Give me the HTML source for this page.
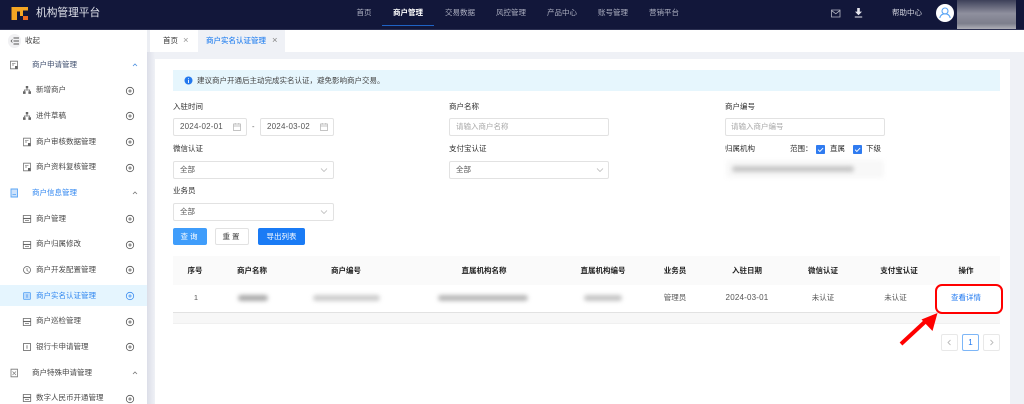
<!DOCTYPE html>
<html lang="zh">
<head>
<meta charset="utf-8">
<style>
html{margin:0;padding:0;width:1024px;height:404px;overflow:hidden;background:#eff1f6}
body{margin:0;padding:0;width:1024px;height:404px;position:relative;overflow:hidden;font-family:"Liberation Sans","Noto Sans CJK SC",sans-serif;font-size:7.5px;color:#4a4a4a}
#w{position:absolute;left:0;top:0;width:1024px;height:404px;overflow:hidden;filter:blur(.35px)}
.b,.t,svg.i{position:absolute}
.t{white-space:nowrap;line-height:10px;height:10px}
.c{transform:translateX(-50%)}
.nav{color:#aeb1c2;top:8px}
.s{color:#484848}
.g{color:#3c4c6c}
.lab{color:#2e2e2e}
.box{position:absolute;box-sizing:border-box;border:1px solid #e2e2e2;border-radius:2px;background:#fff}
.blur{position:absolute;background:#b4b4b4;filter:blur(2.2px);border-radius:3px}
.th{top:266px;color:#222;font-weight:600}
.td{top:293px;color:#555}
svg{overflow:visible}
</style>
</head>
<body>
<div id="w">
<svg width="0" height="0" style="position:absolute">
<symbol id="plus" viewBox="0 0 10 10"><circle cx="5" cy="5" r="3.7" fill="none" stroke="#555" stroke-width=".8"/><path d="M5 3.2v3.6M3.2 5h3.6" stroke="#555" stroke-width=".8"/></symbol>
<symbol id="plusb" viewBox="0 0 10 10"><circle cx="5" cy="5" r="3.7" fill="none" stroke="#3c8df0" stroke-width=".8"/><path d="M5 3.2v3.6M3.2 5h3.6" stroke="#3c8df0" stroke-width=".8"/></symbol>
<symbol id="tree" viewBox="0 0 10 10"><path d="M3.8 1h2.4v2.4H3.8zM1 6.3h2.6v2.6H1zM6.4 6.3H9v2.6H6.4z" fill="#666"/><path d="M5 3.4v1.5M2.3 6.3V5h5.4v1.3" stroke="#666" stroke-width=".7" fill="none"/></symbol>
<symbol id="doc" viewBox="0 0 10 10"><path d="M1.5 1.2h7v7.6h-7z" fill="none" stroke="#777" stroke-width=".8"/><path d="M3 3.3h3.5M3 5h2" stroke="#777" stroke-width=".7"/><path d="M6 6h2.6v2.8H6z" fill="#666"/></symbol>
<symbol id="shop" viewBox="0 0 10 10"><path d="M1.3 1.5h7.4v7H1.3z" fill="none" stroke="#666" stroke-width=".8"/><path d="M1.3 4.5h7.4" stroke="#666" stroke-width="1.1"/><path d="M3 6.5h4" stroke="#666" stroke-width=".7"/></symbol>
<symbol id="cal" viewBox="0 0 10 10"><path d="M1.5 2h7v6.5h-7zM1.5 4h7M3.2 1v1.6M6.8 1v1.6" fill="none" stroke="#b0b0b0" stroke-width=".7"/></symbol>
<symbol id="down" viewBox="0 0 10 10"><path d="M2 3.5L5 6.5 8 3.5" fill="none" stroke="#b0b0b0" stroke-width=".7"/></symbol>
<symbol id="chk" viewBox="0 0 10 10"><rect x="0" y="0" width="10" height="10" rx="1" fill="#2f7bf0"/><path d="M2.3 5.2l2 2 3.6-3.8" fill="none" stroke="#fff" stroke-width="1"/></symbol>
</svg>

<!-- header -->
<div class="b" style="left:0;top:0;width:1024px;height:30px;background:#12173a"></div>
<svg class="i" style="left:11px;top:6px" width="18" height="15" viewBox="0 0 18 15">
<path d="M.5 1H17V4.500H12V10H9V5.500H6V14H.5z" fill="#f5a623"/>
<rect x="12" y="10" width="5" height="4" fill="#ee6a1f"/>
</svg>
<div class="t" style="left:36px;top:8px;font-size:10.7px;line-height:11px;height:11px;color:#e2e4ec">机构管理平台</div>
<div class="t nav c" style="left:364px">首页</div>
<div class="t nav c" style="left:408px;color:#fff;font-weight:600">商户管理</div>
<div class="t nav c" style="left:460px">交易数据</div>
<div class="t nav c" style="left:511px">风控管理</div>
<div class="t nav c" style="left:562px">产品中心</div>
<div class="t nav c" style="left:613px">账号管理</div>
<div class="t nav c" style="left:664px">营销平台</div>
<div class="b" style="left:382px;top:25px;width:52px;height:1px;background:#1f63c4"></div>
<svg class="i" style="left:831px;top:9px" width="10" height="9" viewBox="0 0 10 9"><path d="M.5 1h8.500v7H.5z" fill="none" stroke="#b5b7c4" stroke-width=".8"/><path d="M.5 1.500L4.800 4.800 9 1.500" fill="none" stroke="#b5b7c4" stroke-width=".8"/></svg>
<svg class="i" style="left:854px;top:8px" width="9" height="10" viewBox="0 0 9 10"><path d="M3.200 0h2.600v3.600H8L4.500 7.200 1 3.600h2.200z" fill="#e6e7ee"/><path d="M.8 9h7.400" stroke="#e6e7ee" stroke-width="1"/></svg>
<div class="t" style="left:892px;top:8px;color:#d4d6e0">帮助中心</div>
<svg class="i" style="left:936px;top:4px" width="18" height="18" viewBox="0 0 18 18"><circle cx="9" cy="9" r="9" fill="#fff"/><circle cx="9" cy="7" r="3" fill="none" stroke="#5aa5f5" stroke-width="1.100"/><path d="M3.800 14c.6-3 2.600-4.200 5.200-4.200s4.600 1.200 5.200 4.200" fill="none" stroke="#5aa5f5" stroke-width="1.100"/></svg>
<div class="b" style="left:957px;top:0;width:59px;height:30px;background:linear-gradient(180deg,#3d4059 0%,#8f909e 45%,#7c7e8c 78%,#b9b9c0 100%)"></div>
<div class="b" style="left:0;top:29px;width:1024px;height:1px;background:#2c3152"></div>

<!-- sidebar -->
<div class="b" style="left:0;top:30px;width:147px;height:374px;background:#fff"></div>
<div class="b" style="left:147px;top:30px;width:8px;height:374px;background:linear-gradient(90deg,#dcdee8,#eff1f6)"></div>
<div class="b" style="left:8px;top:34px;width:13px;height:14px;border-radius:7px;background:#f1f1f3"></div>
<svg class="i" style="left:10px;top:36px" width="10" height="10" viewBox="0 0 10 10"><path d="M3.500 2H9M3.500 5H9M3.500 8H9" stroke="#555" stroke-width=".9"/><path d="M2.400 3.500L1 5l1.400 1.500" fill="none" stroke="#555" stroke-width=".7"/></svg>
<div class="t" style="left:25px;top:36px;color:#444">收起</div>

<svg class="i" style="left:9px;top:60px" width="10" height="10"><use href="#doc"/></svg>
<div class="t g" style="left:32px;top:60px">商户申请管理</div>
<svg class="i" style="left:130px;top:60px" width="10" height="10" viewBox="0 0 10 10"><path d="M3 6l2-2 2 2" fill="none" stroke="#4a8fe0" stroke-width=".8"/></svg>

<svg class="i" style="left:22px;top:85px" width="10" height="10"><use href="#tree"/></svg>
<div class="t s" style="left:36px;top:85px">新增商户</div>
<svg class="i" style="left:124.500px;top:85.500px" width="10" height="10"><use href="#plus"/></svg>

<svg class="i" style="left:22px;top:111px" width="10" height="10"><use href="#tree"/></svg>
<div class="t s" style="left:36px;top:111px">进件草稿</div>
<svg class="i" style="left:124.500px;top:111px" width="10" height="10"><use href="#plus"/></svg>

<svg class="i" style="left:22px;top:137px" width="10" height="10"><use href="#doc"/></svg>
<div class="t s" style="left:36px;top:136.500px">商户审核数据管理</div>
<svg class="i" style="left:124.500px;top:137px" width="10" height="10"><use href="#plus"/></svg>

<svg class="i" style="left:22px;top:162px" width="10" height="10"><use href="#doc"/></svg>
<div class="t s" style="left:36px;top:162px">商户资料复核管理</div>
<svg class="i" style="left:124.500px;top:162.500px" width="10" height="10"><use href="#plus"/></svg>

<svg class="i" style="left:9px;top:188px" width="10" height="10" viewBox="0 0 10 10"><path d="M2 1h6.500v8H2z" fill="#cfe3fb" stroke="#5aa5f5" stroke-width=".9"/><path d="M3.500 6.500h3.500" stroke="#5aa5f5" stroke-width=".8"/></svg>
<div class="t" style="left:32px;top:188px;color:#2f86f0">商户信息管理</div>
<svg class="i" style="left:130px;top:188px" width="10" height="10" viewBox="0 0 10 10"><path d="M3 6l2-2 2 2" fill="none" stroke="#777" stroke-width=".8"/></svg>

<svg class="i" style="left:22px;top:214px" width="10" height="10"><use href="#shop"/></svg>
<div class="t s" style="left:36px;top:213.500px">商户管理</div>
<svg class="i" style="left:124.500px;top:214px" width="10" height="10"><use href="#plus"/></svg>

<svg class="i" style="left:22px;top:239.500px" width="10" height="10"><use href="#shop"/></svg>
<div class="t s" style="left:36px;top:239px">商户归属修改</div>
<svg class="i" style="left:124.500px;top:239.500px" width="10" height="10"><use href="#plus"/></svg>

<svg class="i" style="left:22px;top:265px" width="10" height="10" viewBox="0 0 10 10"><circle cx="5" cy="5" r="3.500" fill="none" stroke="#666" stroke-width=".8"/><path d="M5 3v2.500l1.500 1" fill="none" stroke="#666" stroke-width=".7"/></svg>
<div class="t s" style="left:36px;top:265px">商户开发配置管理</div>
<svg class="i" style="left:124.500px;top:265px" width="10" height="10"><use href="#plus"/></svg>

<div class="b" style="left:0;top:285px;width:147px;height:21px;background:#e5f5fe"></div>
<svg class="i" style="left:22px;top:291px" width="10" height="10" viewBox="0 0 10 10"><rect x="1.500" y="1.500" width="7" height="7" rx="1" fill="#bcdcfb" stroke="#5aa5f5" stroke-width=".8"/><path d="M5 3.200v3.600" stroke="#3c8df0" stroke-width=".8"/></svg>
<div class="t" style="left:36px;top:290.500px;color:#2f86f0">商户实名认证管理</div>
<svg class="i" style="left:124.500px;top:291px" width="10" height="10"><use href="#plusb"/></svg>

<svg class="i" style="left:22px;top:316.500px" width="10" height="10"><use href="#shop"/></svg>
<div class="t s" style="left:36px;top:316px">商户巡检管理</div>
<svg class="i" style="left:124.500px;top:316.500px" width="10" height="10"><use href="#plus"/></svg>

<svg class="i" style="left:22px;top:342px" width="10" height="10" viewBox="0 0 10 10"><rect x="1.500" y="1.500" width="7" height="7" fill="none" stroke="#666" stroke-width=".8"/><path d="M5 3.200v3.600" stroke="#666" stroke-width=".8"/></svg>
<div class="t s" style="left:36px;top:341.500px">银行卡申请管理</div>
<svg class="i" style="left:124.500px;top:342px" width="10" height="10"><use href="#plus"/></svg>

<svg class="i" style="left:9px;top:368px" width="10" height="10" viewBox="0 0 10 10"><path d="M2 1.200h6.500v7.600H2z" fill="none" stroke="#777" stroke-width=".8"/><path d="M3.500 3.500l3.500 3.500M7 3.500L3.500 7" stroke="#777" stroke-width=".6"/></svg>
<div class="t g" style="left:32px;top:367.500px;color:#444">商户特殊申请管理</div>
<svg class="i" style="left:130px;top:368px" width="10" height="10" viewBox="0 0 10 10"><path d="M3 6l2-2 2 2" fill="none" stroke="#777" stroke-width=".8"/></svg>

<svg class="i" style="left:22px;top:393px" width="10" height="10"><use href="#shop"/></svg>
<div class="t s" style="left:36px;top:393px;height:10px">数字人民币开通管理</div>
<svg class="i" style="left:124.500px;top:393.500px" width="10" height="10"><use href="#plus"/></svg>

<!-- tabs -->
<div class="b" style="left:147px;top:30px;width:877px;height:22px;background:#fff"></div>
<div class="b" style="left:147px;top:30px;width:3px;height:22px;background:#eceef3"></div>
<div class="t" style="left:163px;top:35.500px;color:#333">首页</div>
<div class="t" style="left:183px;top:35.500px;color:#999;font-size:9.500px">×</div>
<div class="b" style="left:198px;top:30px;width:87px;height:22px;background:#eff1f6"></div>
<div class="t" style="left:206px;top:36px;color:#2f86f0;font-weight:500">商户实名认证管理</div>
<div class="t" style="left:272px;top:36px;color:#888;font-size:9.500px">×</div>

<!-- card -->
<div class="b" style="left:155px;top:59px;width:855px;height:345px;background:#fff"></div>

<!-- alert -->
<div class="b" style="left:173px;top:70px;width:827px;height:21px;background:#e6f6fd"></div>
<svg class="i" style="left:184px;top:76px" width="9" height="9" viewBox="0 0 9 9"><circle cx="4.500" cy="4.500" r="4" fill="#2378ee"/><path d="M4.500 2v.8M4.500 3.700V7" stroke="#fff" stroke-width=".9"/></svg>
<div class="t" style="left:197px;top:75.500px;color:#444">建议商户开通后主动完成实名认证，避免影响商户交易。</div>

<!-- form -->
<div class="t lab" style="left:173px;top:102px">入驻时间</div>
<div class="box" style="left:173px;top:118px;width:74px;height:18px"></div>
<div class="t" style="left:180px;top:122px;color:#555;font-size:8px;letter-spacing:.2px">2024-02-01</div>
<svg class="i" style="left:232px;top:122px" width="10" height="10"><use href="#cal"/></svg>
<div class="t" style="left:252px;top:122px;color:#555">-</div>
<div class="box" style="left:260px;top:118px;width:74px;height:18px"></div>
<div class="t" style="left:267px;top:122px;color:#555;font-size:8px;letter-spacing:.2px">2024-03-02</div>
<svg class="i" style="left:319px;top:122px" width="10" height="10"><use href="#cal"/></svg>

<div class="t lab" style="left:173px;top:144px">微信认证</div>
<div class="box" style="left:173px;top:161px;width:161px;height:17.500px"></div>
<div class="t" style="left:180px;top:165px;color:#555">全部</div>
<svg class="i" style="left:319px;top:164.500px" width="10" height="10"><use href="#down"/></svg>

<div class="t lab" style="left:173px;top:186px">业务员</div>
<div class="box" style="left:173px;top:203px;width:161px;height:17.500px"></div>
<div class="t" style="left:180px;top:207px;color:#555">全部</div>
<svg class="i" style="left:319px;top:206.500px" width="10" height="10"><use href="#down"/></svg>

<div class="b" style="left:173px;top:228px;width:34px;height:17px;border-radius:2px;background:#3f9dfb"></div>
<div class="t c" style="left:190px;top:231.500px;color:#fff;letter-spacing:2px">查询</div>
<div class="box" style="left:215px;top:228px;width:34px;height:17px"></div>
<div class="t c" style="left:232px;top:231.500px;color:#444;letter-spacing:2px">重置</div>
<div class="b" style="left:258px;top:228px;width:47px;height:17px;border-radius:2px;background:#1a7bf5"></div>
<div class="t c" style="left:281.500px;top:231.500px;color:#fff">导出列表</div>

<div class="t lab" style="left:449px;top:102px">商户名称</div>
<div class="box" style="left:449px;top:118px;width:160px;height:18px"></div>
<div class="t" style="left:456px;top:122px;color:#a8a8a8">请输入商户名称</div>

<div class="t lab" style="left:449px;top:144px">支付宝认证</div>
<div class="box" style="left:449px;top:161px;width:160px;height:17.500px"></div>
<div class="t" style="left:456px;top:165px;color:#555">全部</div>
<svg class="i" style="left:595px;top:164.500px" width="10" height="10"><use href="#down"/></svg>

<div class="t lab" style="left:725px;top:102px">商户编号</div>
<div class="box" style="left:724.500px;top:118px;width:160px;height:18px"></div>
<div class="t" style="left:731px;top:122px;color:#a8a8a8">请输入商户编号</div>

<div class="t lab" style="left:725px;top:144px">归属机构</div>
<div class="t lab" style="left:790px;top:144px">范围：</div>
<svg class="i" style="left:816px;top:144.500px" width="9" height="9"><use href="#chk"/></svg>
<div class="t lab" style="left:830px;top:144px">直属</div>
<svg class="i" style="left:853px;top:144.500px" width="9" height="9"><use href="#chk"/></svg>
<div class="t lab" style="left:866px;top:144px">下级</div>
<div class="blur" style="left:726px;top:160px;width:158px;height:18px;background:#f8f8f8"></div>
<div class="blur" style="left:732px;top:166px;width:122px;height:6px;background:#c6c6c6"></div>

<!-- table -->
<div class="b" style="left:173px;top:256px;width:827px;height:29px;background:#fafafa"></div>
<div class="t th c" style="left:195px">序号</div>
<div class="t th c" style="left:252px">商户名称</div>
<div class="t th c" style="left:346px">商户编号</div>
<div class="t th c" style="left:484px">直属机构名称</div>
<div class="t th c" style="left:603px">直属机构编号</div>
<div class="t th c" style="left:675px">业务员</div>
<div class="t th c" style="left:747px">入驻日期</div>
<div class="t th c" style="left:823px">微信认证</div>
<div class="t th c" style="left:899px">支付宝认证</div>
<div class="t th c" style="left:966px">操作</div>

<div class="t td c" style="left:196px">1</div>
<div class="blur" style="left:238px;top:295px;width:30px;height:6px;background:#aaa"></div>
<div class="blur" style="left:313px;top:295px;width:67px;height:6px;background:#ccc"></div>
<div class="blur" style="left:438px;top:295px;width:90px;height:6px;background:#b8b8b8"></div>
<div class="blur" style="left:584px;top:295px;width:38px;height:6px;background:#c4c4c4"></div>
<div class="t td c" style="left:675px">管理员</div>
<div class="t td c" style="left:747px;font-size:8px;letter-spacing:.2px">2024-03-01</div>
<div class="t td c" style="left:823px">未认证</div>
<div class="t td c" style="left:895.500px">未认证</div>
<div class="t td c" style="left:966px;color:#1f78f0">查看详情</div>

<div class="b" style="left:173px;top:312px;width:827px;height:1px;background:#e2e2e2"></div>
<div class="b" style="left:173px;top:313px;width:827px;height:11px;background:#f7f7f7;border-bottom:1px solid #f0f0f0;box-sizing:border-box"></div>

<!-- red annotation -->
<div class="b" style="left:935px;top:283.500px;width:68px;height:30.500px;box-sizing:border-box;border:2px solid #f00;border-radius:7px"></div>
<svg class="i" style="left:895px;top:305px" width="50" height="48" viewBox="0 0 50 48"><path d="M6 39L33 14" stroke="#f00" stroke-width="4"/><path d="M42.500 8L26.500 14.500 37.500 26z" fill="#f00"/></svg>

<!-- pagination -->
<div class="box" style="left:941px;top:334px;width:17px;height:17px;border-color:#e8e8e8"></div>
<svg class="i" style="left:945px;top:338px" width="9" height="9" viewBox="0 0 9 9"><path d="M5.500 2L3 4.500 5.500 7" fill="none" stroke="#bbb" stroke-width=".9"/></svg>
<div class="box" style="left:962px;top:334px;width:17px;height:17px;border-color:#7db6f7"></div>
<div class="t c" style="left:970.500px;top:337.500px;color:#1f78f0;font-size:8px">1</div>
<div class="box" style="left:983px;top:334px;width:17px;height:17px;border-color:#e8e8e8"></div>
<svg class="i" style="left:987px;top:338px" width="9" height="9" viewBox="0 0 9 9"><path d="M3.500 2L6 4.500 3.500 7" fill="none" stroke="#bbb" stroke-width=".9"/></svg>
</div>
</body>
</html>
